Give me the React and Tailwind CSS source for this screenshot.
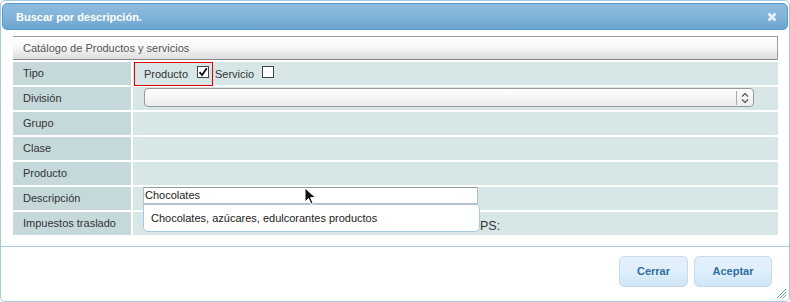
import React from 'react'

const rows = ['Tipo', 'División', 'Grupo', 'Clase', 'Producto', 'Descripción', 'Impuestos traslado']

function Check({ checked }) {
  return (
    <span className="inline-flex h-[12px] w-[12px] items-center justify-center border border-[#444] bg-white">
      {checked && (
        <svg width="10" height="10" viewBox="0 0 10 10">
          <path d="M1.5 5.2 L4 8 L8.8 1.2" fill="none" stroke="#111" strokeWidth="1.8" />
        </svg>
      )}
    </span>
  )
}

function Cell({ label }) {
  if (label === 'Tipo') {
    return (
      <div className="flex h-full items-start">
        <div className="ml-[1px] flex h-[24px] w-[79px] items-start border border-[#e00000] pl-[9px]">
          <span className="mt-[5px] leading-[13px]">Producto</span>
          <span className="ml-[9px] mt-[3px] flex"><Check checked /></span>
        </div>
        <span className="ml-[2px] mt-[6px] leading-[13px]">Servicio</span>
        <span className="ml-[8px] mt-[4px] flex"><Check /></span>
      </div>
    )
  }
  if (label === 'División') {
    return (
      <div className="flex h-full items-start pt-[1px]">
        <div className="ml-[11px] flex h-[19px] w-[610px] items-center justify-end rounded-[4px] border border-[#9a9a9a] bg-gradient-to-b from-white to-[#ececec]">
          <div className="flex h-[14px] w-[17px] items-center justify-center border-l border-[#aaa]">
            <svg width="8" height="12" viewBox="0 0 8 12">
              <path d="M1 4.5 L4 1.5 L7 4.5 M1 7.5 L4 10.5 L7 7.5" fill="none" stroke="#555" strokeWidth="1.2" />
            </svg>
          </div>
        </div>
      </div>
    )
  }
  if (label === 'Descripción') {
    return (
      <div className="flex h-full items-start">
        <div className="ml-[10px] flex h-[17px] w-[335px] items-center border border-[#bbb] border-t-[#999] bg-white pl-[1px] text-[#222]">
          Chocolates
        </div>
      </div>
    )
  }
  if (label === 'Impuestos traslado') {
    return (
      <div className="flex h-full items-center pl-[347px] pt-[5px] text-[12.5px] text-[#333]">PS:</div>
    )
  }
  return null
}

export default function App() {
  return (
    <div className="relative h-[302px] w-[790px] overflow-hidden rounded-[5px] border border-[#a6c9e2] bg-white font-['Liberation_Sans',Arial,sans-serif] text-[11px] text-[#333]">
      <div className="mx-[1px] mt-[2px] flex h-[27px] items-center justify-between rounded-[5px] border border-[#5b9bd0] bg-gradient-to-b from-[#8dbbde] via-[#84b4da] to-[#6aa4d0] pl-[13px] pr-[10px]">
        <span className="mt-[1px] text-[11px] font-bold text-white">Buscar por descripción.</span>
        <svg width="10" height="10" viewBox="0 0 10 10">
          <path d="M1.5 1.5 L8.5 8.5 M8.5 1.5 L1.5 8.5" stroke="#e8f1f8" strokeWidth="2.6" />
        </svg>
      </div>

      <div className="ml-[12px] mr-[11px] mt-[6px]">
        <div className="flex h-[24px] items-center border-r border-t border-b border-[#9b9b9b] border-b-[#8a8a8a] bg-gradient-to-b from-white via-[#f7f7f7] to-[#dcdcdc] pl-[10px] text-[#555]">
          Catálogo de Productos y servicios
        </div>
        <div className="relative mt-[2px] flex flex-col gap-[2px]">
          {rows.map((label) => (
            <div key={label} className="flex h-[23px] gap-[2px]">
              <div className="flex w-[118px] shrink-0 items-center bg-[#c5d9db] pl-[10px] text-[#333]">{label}</div>
              <div className="flex-1 bg-[#d7e6e6]">
                <Cell label={label} />
              </div>
            </div>
          ))}
          <div className="absolute left-[130px] top-[142px] flex h-[28px] w-[337px] items-center rounded-b-[5px] rounded-tr-[4px] border border-[#a6c9e2] bg-white pl-[7px] text-[#222]">
            Chocolates, azúcares, edulcorantes productos
          </div>
          <svg className="absolute left-[291px] top-[125px]" width="13" height="19" viewBox="0 0 13 19">
            <path d="M1 1 L1 15 L4.5 11.5 L7 17 L9 16 L6.6 10.6 L11.5 10.6 Z" fill="#111" stroke="#fff" strokeWidth="1" />
          </svg>
        </div>
      </div>

      <div className="mt-[11px] flex h-[55px] items-start justify-end gap-[6px] border-t border-[#a6c9e2] pr-[17px] pt-[9px]">
        <button className="h-[31px] w-[69px] rounded-[5px] border border-[#c5dbec] bg-gradient-to-b from-[#e4f0fb] via-[#dfeffc] to-[#d0e5f5] text-[11px] font-bold text-[#2e6e9e]">
          Cerrar
        </button>
        <button className="h-[31px] w-[78px] rounded-[5px] border border-[#c5dbec] bg-gradient-to-b from-[#e4f0fb] via-[#dfeffc] to-[#d0e5f5] text-[11px] font-bold text-[#2e6e9e]">
          Aceptar
        </button>
      </div>

      <svg className="absolute bottom-[2px] right-[2px]" width="11" height="11" viewBox="0 0 11 11">
        <path d="M10 1 L1 10 M10 4 L4 10 M10 7 L7 10" stroke="#6d9cc3" strokeWidth="1" />
      </svg>
    </div>
  )
}
